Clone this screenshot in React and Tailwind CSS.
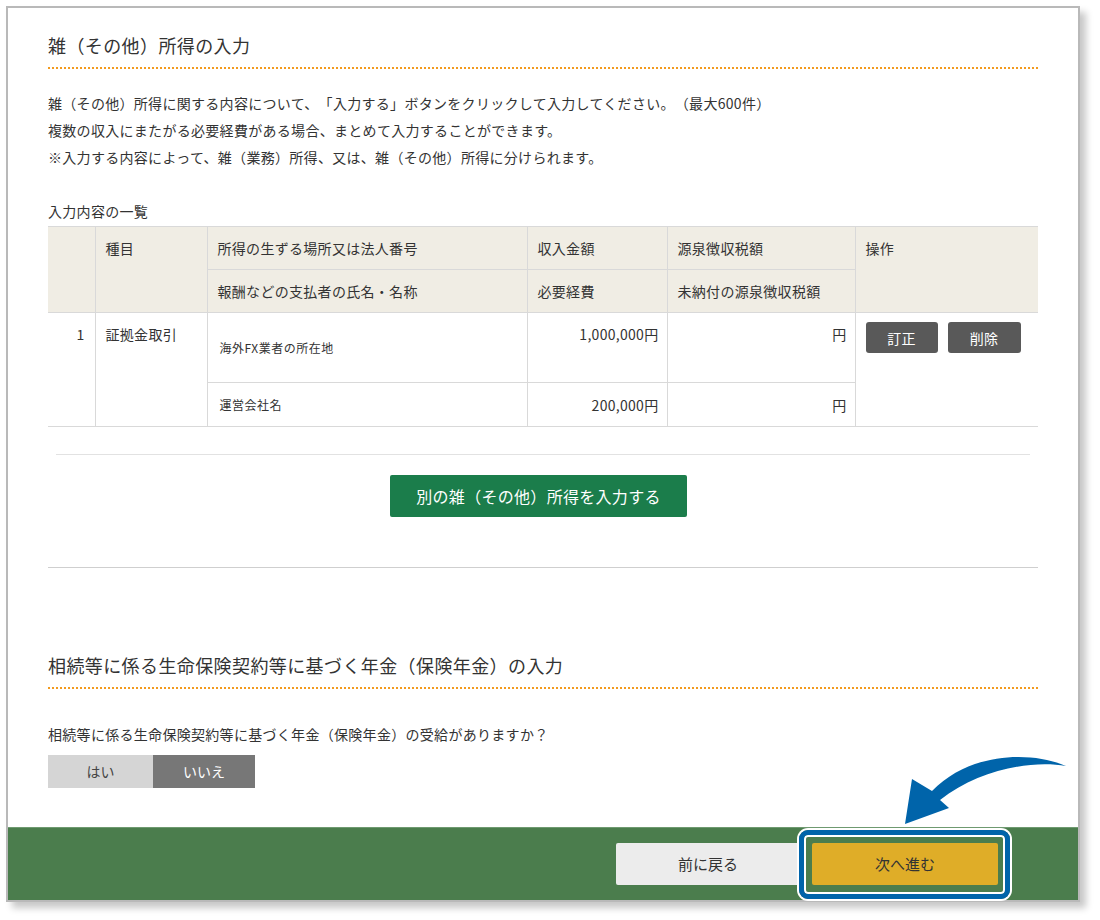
const font = { fontFamily: '"Noto Sans CJK JP", "Noto Sans", sans-serif' };

const Heading = ({ children }) => (
  <h2 className="text-[18px] leading-[27px] tracking-[0.4px] text-[#333] pb-[8px] border-b-2 border-dotted border-[#f39a1e]">
    {children}
  </h2>
);

export default function App() {
  const th = "border border-[#d9d9d9] bg-[#f0ede4] px-[10px] py-[10px] leading-[22px] text-left font-normal align-top";
  const td = "border border-[#d9d9d9] px-[10px] leading-[22px]";

  return (
    <div className="relative w-[1100px] h-[920px] bg-white text-[#333] [text-spacing-trim:space-all]" style={font}>
      {/* frame */}
      <div className="absolute left-[6px] top-[6px] w-[1074px] h-[896px] border-2 border-[#b9b9b9] bg-white shadow-[6px_6px_7px_rgba(0,0,0,0.22)] flex flex-col">
        <div className="flex-1 px-[40px] pt-[24px]">
          <Heading>雑（その他）所得の入力</Heading>

          <div className="mt-[21px] text-[14px] leading-[27px] tracking-[0.3px]">
            <p>雑（その他）所得に関する内容について、「入力する」ボタンをクリックして入力してください。（最大600件）</p>
            <p>複数の収入にまたがる必要経費がある場合、まとめて入力することができます。</p>
            <p>※入力する内容によって、雑（業務）所得、又は、雑（その他）所得に分けられます。</p>
          </div>

          <p className="mt-[30px] text-[14px] leading-[20px] tracking-[0.3px]">入力内容の一覧</p>

          <table className="mt-[5px] w-[990px] border-collapse table-fixed text-[14px] tracking-[0.3px]">
            <colgroup>
              <col className="w-[47px]" />
              <col className="w-[112px]" />
              <col className="w-[320px]" />
              <col className="w-[140px]" />
              <col className="w-[188px]" />
              <col className="w-[183px]" />
            </colgroup>
            <thead>
              <tr>
                <th rowSpan={2} className={th + " border-l-0"}></th>
                <th rowSpan={2} className={th}>種目</th>
                <th className={th}>所得の生ずる場所又は法人番号</th>
                <th className={th}>収入金額</th>
                <th className={th}>源泉徴収税額</th>
                <th rowSpan={2} className={th + " border-r-0"}>操作</th>
              </tr>
              <tr>
                <th className={th}>報酬などの支払者の氏名・名称</th>
                <th className={th}>必要経費</th>
                <th className={th}>未納付の源泉徴収税額</th>
              </tr>
            </thead>
            <tbody>
              <tr className="h-[70px]">
                <td rowSpan={2} className={td + " border-l-0 align-top pt-[10px] text-right"}>1</td>
                <td rowSpan={2} className={td + " align-top pt-[10px]"}>証拠金取引</td>
                <td className={td + " align-middle text-[12px] tracking-[0.5px] pl-[12px]"}>海外FX業者の所在地</td>
                <td className={td + " align-top pt-[10px] text-right pr-[8px]"}>1,000,000円</td>
                <td className={td + " align-top pt-[10px] text-right pr-[8px]"}>円</td>
                <td rowSpan={2} className={td + " border-r-0 align-top pt-[9px]"}>
                  <div className="flex gap-[10px]">
                    <button className="w-[72px] h-[31px] rounded-[3px] bg-[#595959] text-white text-[14px]">訂正</button>
                    <button className="w-[73px] h-[31px] rounded-[3px] bg-[#595959] text-white text-[14px]">削除</button>
                  </div>
                </td>
              </tr>
              <tr className="h-[44px]">
                <td className={td + " align-middle text-[12px] tracking-[0.5px] pl-[12px]"}>運営会社名</td>
                <td className={td + " align-middle text-right pr-[8px]"}>200,000円</td>
                <td className={td + " align-middle text-right pr-[8px]"}>円</td>
              </tr>
            </tbody>
          </table>

          <div className="mt-[27px] mx-[8px] border-t border-[#e2e2e2]"></div>

          <div className="mt-[20px] flex justify-center pr-[9px]">
            <button className="w-[297px] h-[42px] rounded-[2px] bg-[#1b7d4b] text-white text-[16px] tracking-[0.3px]">
              別の雑（その他）所得を入力する
            </button>
          </div>

          <div className="mt-[50px] border-t border-[#cfcfcf]"></div>

          <div className="mt-[84px]">
            <Heading>相続等に係る生命保険契約等に基づく年金（保険年金）の入力</Heading>
          </div>

          <p className="mt-[35px] text-[14px] leading-[20px] tracking-[0.3px]">
            相続等に係る生命保険契約等に基づく年金（保険年金）の受給がありますか？
          </p>

          <div className="mt-[11px] flex">
            <button className="w-[105px] h-[33px] bg-[#d5d5d5] text-[#444] text-[14px]">はい</button>
            <button className="w-[102px] h-[33px] bg-[#777777] text-white text-[14px]">いいえ</button>
          </div>
        </div>

        {/* footer */}
        <div className="h-[73px] bg-[#4b7d4d] border-t border-[#6f9a70] flex items-center justify-end pr-[80px] gap-[12px]">
          <button className="w-[184px] h-[42px] rounded-[2px] bg-[#ececec] text-[#333] text-[15px]">前に戻る</button>
          <button className="w-[186px] h-[42px] rounded-[2px] bg-[#dfad28] text-[#333] text-[15px]">次へ進む</button>
        </div>
      </div>

      {/* highlight around next button */}
      <div className="absolute left-[799px] top-[830px] w-[211px] h-[69px] rounded-[9px] border-[5px] border-[#0064aa] shadow-[0_0_0_2px_#ffffff,inset_0_0_0_2px_#ffffff] pointer-events-none"></div>

      {/* curved arrow */}
      <svg className="absolute left-0 top-0 pointer-events-none" width="1100" height="920" viewBox="0 0 1100 920">
        <path
          d="M1066 766 C1035 752 972 750 932 791 L912 779 L905 824 L949 808 L940 800 C978 770 1030 760 1066 766 Z"
          fill="#0064aa"
        />
      </svg>
    </div>
  );
}
